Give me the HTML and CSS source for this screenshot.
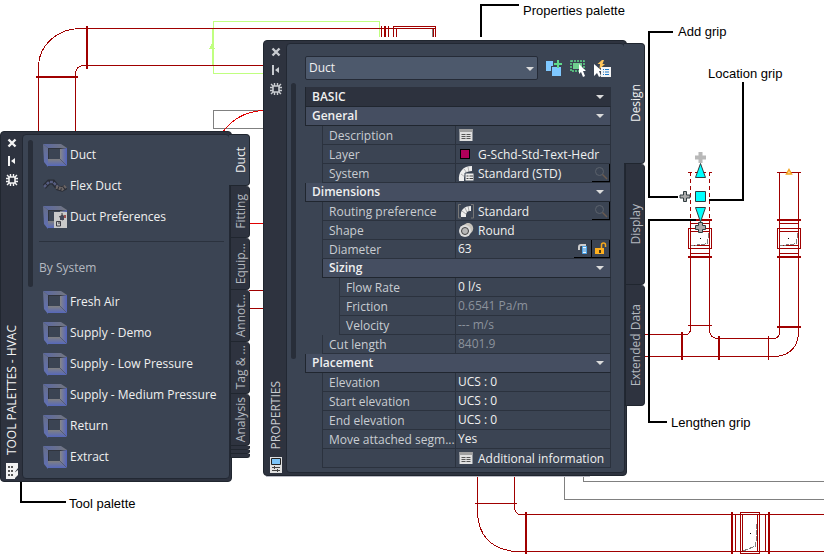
FILE: index.html
```html
<!DOCTYPE html>
<html lang="en">
<head>
<meta charset="utf-8">
<title>Duct properties</title>
<link rel="stylesheet" href="styles.css">
</head>
<body>
<svg class="symbols" aria-hidden="true">
  <defs>
    <linearGradient id="faceTop" x1="0" y1="0" x2="1" y2="0"><stop offset="0" stop-color="#5a68a4"/><stop offset="1" stop-color="#74777f"/></linearGradient>
    <linearGradient id="faceLeft" x1="0" y1="0" x2="0" y2="1"><stop offset="0" stop-color="#666e88"/><stop offset="1" stop-color="#6070b8"/></linearGradient>
    <linearGradient id="faceRight" x1="0" y1="0" x2="1" y2="0"><stop offset="0" stop-color="#878787"/><stop offset="1" stop-color="#5263bd"/></linearGradient>
    <linearGradient id="faceBottom" x1="0" y1="0" x2="0" y2="1"><stop offset="0" stop-color="#808080"/><stop offset="1" stop-color="#5668bb"/></linearGradient>
    <symbol id="duct" viewBox="0 0 24 24">
      <path d="M0 1H18L24 5H5Z" fill="url(#faceTop)"/>
      <path d="M0 1L5 5V24L1 19Z" fill="url(#faceLeft)"/>
      <path d="M5 5H24V23H5Z" fill="#30343d"/>
      <path d="M6 6H17V16H6Z" fill="#3b4453"/>
      <path d="M17 6L24 5V23L17 16Z" fill="url(#faceRight)"/>
      <path d="M5 16H17L24 23H5Z" fill="url(#faceBottom)"/>
      <path d="M17 16L24 23" stroke="#555c74"/>
    </symbol>
    <symbol id="close" viewBox="0 0 10 10"><path d="M1.500 1.500L8.500 8.500M8.500 1.500L1.500 8.500" stroke="currentColor" stroke-width="2.400"/></symbol>
    <symbol id="pin" viewBox="0 0 10 10"><path d="M1 0H3V10H1ZM4 5L8 2V8Z" fill="currentColor"/></symbol>
    <symbol id="gear" viewBox="0 0 12 12"><path d="M3 3H9V9H3Z" fill="none" stroke="currentColor" stroke-width="1.600"/><path d="M4.500 0V3M7.500 0V3M4.500 9V12M7.500 9V12M0 4.500H3M0 7.500H3M9 4.500H12M9 7.500H12M1 1L3 3M11 1L9 3M1 11L3 9M11 11L9 9" stroke="currentColor" stroke-width="1.400"/></symbol>
    <symbol id="sheet" viewBox="0 0 13 12"><path d="M0 0H13V12H0Z" fill="#e0e0e0"/><path d="M0 0H13V3H0Z" fill="#a0a0a0"/><path d="M2 5.500H6M7 5.500H11M2 7.500H6M7 7.500H11M2 9.500H6M7 9.500H11" stroke="#555"/></symbol>
    <symbol id="search" viewBox="0 0 14 14"><circle cx="5.500" cy="5.500" r="4" fill="none" stroke="#5b626c"/><path d="M8.500 8.500L13 13" stroke="#6b5b50" stroke-width="1.400"/></symbol>
  </defs>
</svg>

<main class="canvas">
  <svg class="drawing" width="824" height="559" aria-label="Duct layout drawing" role="img">
    <g class="crisp">
      <path class="green" d="M263 73.500H213.500V21.500H379.500V37"/>
      <path class="green" stroke-width="2" d="M213 28V65"/>
      <path fill="#c0ff80" d="M212 43L215 49H209Z"/>
      <path class="gray" d="M263 110.500H213.500V128.500H263M564.500 476V499.500H824M583.500 476V481.500H824M432.500 29V37"/>
      <path stroke="#e00000" fill="none" d="M223.500 131Q238 112 263 110.500M249 223.500H263"/>
      <g class="duct-line">
        <path d="M38.500 131V66A42 38 0 0 1 80 28.500H435M75.500 131V74Q76 66 83 65.500H263"/>
        <path d="M381.500 26V37M388.500 26V37M393.500 37V26.500H435.500V37M396.500 29V37M433.500 29V37"/>
        <path d="M249 290.500H263M249 308.500H263"/>
        <path d="M645 334.500H686Q690.500 334 690.500 329V221M709.500 221V330Q710 338 717 338.500H774Q779 338 779.500 333V172M645 356.500H776Q798 354 798.500 332V172M777 172.500H801M768.500 336V360M688 325.500H712"/>
        <path d="M690 223.500H710M690 231.500H710M690 245.500H710M690 253.500H710M688.500 228.500H711.500V248.500H688.500Z"/>
        <path d="M779 223.500H799M779 231.500H799M779 245.500H799M779 253.500H799M777.500 228.500H800.500V248.500H777.500Z"/>
        <path stroke-dasharray="4 3" d="M690.500 172V219M709.500 172V219M688 172.500H712"/>
        <path d="M477.500 476V514Q480 548 515 551.500H824M514.500 476V507Q515 514 520 514.500H824M475 503.500H517M735.500 514V552M765.500 514V552M742.500 514V552M757.500 514V552M740.500 512.500H759.500V553.500H740.500Z"/>
        <path stroke-width="2" d="M36 77H78M87 26V69M385 26V37M688 220H712M688 257H712M777 220H801M777 257H801M777 327H801M682 332V360M719 336V360M526 512V554M732 512V554M769 512V554"/>
      </g>
      <path class="gray" stroke-dasharray="5 1" d="M708.500 233L707.500 243L704 244.500L691 245.500M797.500 233L796.500 243L793 244.500L780 245.500M756.500 524V536L755.500 546L748 549L743 551"/>
      <path fill="#000" d="M700 238h1v1h-1zM788 238h1v1h-1zM750 533h1v1h-1z"/>
      <path stroke="#b9bac4" d="M266 476.500H590"/>
      <path class="callout" d="M519 5H481V37M673 32H649V197H678M743 82V200H709M696 220H649V422H667M21 482V502H66"/>
    </g>
    <path d="M789 169.500L791.500 174H786.500Z" fill="#ffd9a0" stroke="#f5a623" stroke-width="1.500"/>
    <path d="M698.500 152h4v3.500h3.500v4h-3.500v3.500h-4v-3.500h-3.500v-4h3.500z" fill="#b8b8b8"/>
    <g fill="#00ffff" stroke="#303d40">
      <path d="M700.500 163.500L705.500 177.500H695.500ZM695.500 191.500H705.500V201.500H695.500ZM695.500 207.500H705.500L700.500 222Z"/>
      <path fill="#aaa" d="M698.500 222.500h4v3h3v4h-3v3h-4v-3h-3v-4h3zM683.500 191.500h3v3.500h3.500v3h-3.500v3.500h-3v-3.500h-3.500v-3h3.500z"/>
    </g>
  </svg>

  <span class="note note-properties">Properties palette</span>
  <span class="note note-add">Add grip</span>
  <span class="note note-location">Location grip</span>
  <span class="note note-lengthen">Lengthen grip</span>
  <span class="note note-tool">Tool palette</span>

  <section class="palette tools" aria-label="Tool palettes">
    <header class="strip">
      <button aria-label="Close"><svg width="10" height="10"><use href="#close"/></svg></button>
      <button aria-label="Auto-hide"><svg width="10" height="10"><use href="#pin"/></svg></button>
      <button aria-label="Options"><svg width="12" height="12"><use href="#gear"/></svg></button>
      <h2>TOOL PALETTES - HVAC</h2>
      <svg width="12" height="16" viewBox="0 0 12 16"><path d="M0 0H12V5L9 9V16H0Z" fill="#f2f2f2"/><path d="M12 7V12L8 16V10Z" fill="#f2f2f2"/><path d="M2 3h2v2h-2zM5 3h2v2h-2zM2 7h2v2h-2zM5 7h2v2h-2zM2 11h2v2h-2zM5 11h2v2h-2z" fill="#555"/></svg>
    </header>
    <div class="body">
      <div class="scroll"></div>
      <div class="tool-list">
        <button><svg width="24" height="24"><use href="#duct"/></svg>Duct</button>
        <button><svg width="24" height="24" viewBox="0 0 24 24"><path d="M1 13L6 8L10 8L15 14L19 15L23 13" fill="none" stroke="#292c35" stroke-width="5"/><path d="M1 13L6 8L10 8L15 13" fill="none" stroke="#565d80" stroke-width="2.500" stroke-dasharray="3 1"/><path d="M13 13L19 15L23 12" fill="none" stroke="#6a6464" stroke-width="3.500" stroke-dasharray="2 1"/></svg>Flex Duct</button>
        <button><svg width="24" height="24" viewBox="0 0 24 24"><use href="#duct"/><path d="M11 7H24V23H11Z" fill="#c9c9c9"/><path d="M13.500 16.500H17.500V21H13.500ZM15 18h2M16 12L20 10V15L17 14M19 8V11" fill="none" stroke="#3c3c44"/><path d="M17 11h4v4h-4z" fill="#44485a"/><path d="M21 10h2v3h-2z" fill="#9b5050"/></svg>Duct Preferences</button>
        <hr>
        <h3>By System</h3>
        <button><svg width="24" height="24"><use href="#duct"/></svg>Fresh Air</button>
        <button><svg width="24" height="24"><use href="#duct"/></svg>Supply - Demo</button>
        <button><svg width="24" height="24"><use href="#duct"/></svg>Supply - Low Pressure</button>
        <button><svg width="24" height="24"><use href="#duct"/></svg>Supply - Medium Pressure</button>
        <button><svg width="24" height="24"><use href="#duct"/></svg>Return</button>
        <button><svg width="24" height="24"><use href="#duct"/></svg>Extract</button>
      </div>
    </div>
    <nav class="tabs">
      <button class="active"><span>Duct</span></button>
      <button><span>Fitting</span></button>
      <button><span>Equip...</span></button>
      <button><span>Annot...</span></button>
      <button><span>Tag &amp; ...</span></button>
      <button><span>Analysis</span></button>
      <i></i><i></i><i></i>
    </nav>
  </section>

  <section class="palette props" aria-label="Properties">
    <header class="strip">
      <button aria-label="Close"><svg width="10" height="10"><use href="#close"/></svg></button>
      <button aria-label="Auto-hide"><svg width="10" height="10"><use href="#pin"/></svg></button>
      <button aria-label="Options"><svg width="12" height="12"><use href="#gear"/></svg></button>
      <h2>PROPERTIES</h2>
      <svg width="12" height="16" viewBox="0 0 12 16"><path d="M0 0H12V16H0Z" fill="#e0e0e0"/><path d="M1.500 1.500H10.500V7.500H1.500Z" fill="#7cc4f8" stroke="#222"/><path d="M2 10.500H10M2 13.500H10M4.500 9V12M7.500 12V15" stroke="#444"/></svg>
    </header>
    <div class="body">
      <div class="scroll"></div>
      <div class="content">
        <div class="toolbar">
          <label class="picker"><select aria-label="Object type"><option>Duct</option></select></label>
          <button aria-label="Toggle pickadd"><svg width="16" height="16" viewBox="0 0 16 16"><path d="M0 1H7V6H5V11H0Z" fill="#7fc8ff"/><path d="M6 7H15V16H6Z" fill="#7fc8ff"/><path d="M9 3H16V5H9Z" fill="#3b4453" stroke="#3b4453" stroke-width="2"/><path d="M8 4H16M12 0V8" stroke="#5fd98a" stroke-width="2"/></svg></button>
          <button aria-label="Select objects"><svg width="16" height="17" viewBox="0 0 16 17"><path d="M1 1H14V11H1Z" fill="none" stroke="#5fd98a" stroke-width="1.500" stroke-dasharray="2 1"/><path d="M3 3H12V9H3Z" fill="#6fcf8e"/><path d="M9 4V14L11 12L13 17L15 16L13 11H16Z" fill="#fff"/></svg></button>
          <button aria-label="Quick select"><svg width="17" height="17" viewBox="0 0 17 17"><path d="M0 4V16L3 13L5 17L7 16L5 11H8Z" fill="#fff"/><path d="M8 0L3.500 4H6L5.500 9L11 4H8.500L10 0Z" fill="#ffc65c"/><path d="M7 7H17V17H7Z" fill="#f4f4f4"/><path d="M9 9.500H10M11 9.500H15M9 12H10M11 12H15M9 14.500H10M11 14.500H15" stroke="#1a78c8"/></svg></button>
        </div>
        <table>
          <colgroup><col class="gutter"><col class="gutter"><col class="name"><col></colgroup>
          <tbody>
            <tr class="basic"><th colspan="4"><button>BASIC</button></th></tr>
            <tr class="group"><th colspan="4"><button>General</button></th></tr>
            <tr><td class="gap"></td><td class="label" colspan="2">Description</td><td><div class="value"><svg width="13" height="12"><use href="#sheet"/></svg></div></td></tr>
            <tr><td class="gap"></td><td class="label" colspan="2">Layer</td><td><div class="value"><i class="swatch"></i><span>G-Schd-Std-Text-Hedr</span></div></td></tr>
            <tr><td class="gap"></td><td class="label" colspan="2">System</td><td><div class="value"><svg width="16" height="16" viewBox="0 0 16 16"><path d="M1 16C0 7 5 1 14 1V6C8 6 6 9 6 16Z" fill="#eee"/><path d="M3 9L7 12M6 4L9 8M10 2L11 7" stroke="#999" stroke-width=".7"/><path d="M7 8H16V16H7Z" fill="#eee" stroke="#3b4453"/><path d="M8.500 11H10.500M11.500 11H15M8.500 13.500H10.500M11.500 13.500H15" stroke="#444"/></svg><span>Standard (STD)</span><button class="cell-button" aria-label="Find system"><svg width="14" height="14"><use href="#search"/></svg></button></div></td></tr>
            <tr class="group"><th colspan="4"><button>Dimensions</button></th></tr>
            <tr><td class="gap"></td><td class="label" colspan="2">Routing preference</td><td><div class="value"><svg width="16" height="16" viewBox="0 0 16 16"><path d="M3 1.500H.5V15H3M13 1.500H15.500V15H13" fill="none" stroke="#777"/><path d="M3 14C2 7 6 3 13 3V8C9 8 8 9 8 14Z" fill="#eee"/><path d="M4 8L8 11M7 5L9 9M10 3L11 8" stroke="#888" stroke-width=".7"/></svg><span>Standard</span><button class="cell-button" aria-label="Find routing preference"><svg width="14" height="14"><use href="#search"/></svg></button></div></td></tr>
            <tr><td class="gap"></td><td class="label" colspan="2">Shape</td><td><div class="value"><svg width="16" height="16" viewBox="0 0 16 16"><path d="M2 5L9 1C14 0 17 6 14 10L9 14Z" fill="#c8c4bc"/><circle cx="7" cy="9" r="6" fill="#ddd"/><circle cx="7" cy="9" r="3.500" fill="#b6b6b6" stroke="#444"/></svg><span>Round</span></div></td></tr>
            <tr><td class="gap"></td><td class="label" colspan="2">Diameter</td><td><div class="value"><input aria-label="Diameter" value="63"><button class="cell-button" aria-label="Calculate"><svg width="10" height="10" viewBox="0 0 10 10"><path d="M1 6V3Q1 1 3 1H8" fill="none" stroke="#ccc" stroke-width="2"/><path d="M4.500 2.500H8.500V9.500H4.500Z" fill="#eef6ff" stroke="#4aa3e8"/><path d="M5 5H8M5 7H8" stroke="#2f86cc"/></svg></button><button class="cell-button lock" aria-label="Unlock"><svg width="12" height="13" viewBox="0 0 12 13"><path d="M6.500 6V3Q6.500 1 8.500 1T10.500 3V5" fill="none" stroke="#f5a81c" stroke-width="1.500"/><path d="M0 6H9V12H0Z" fill="#ffb01f"/><path d="M4 8H6V11H4Z" fill="#4a3a18"/></svg></button></div></td></tr>
            <tr class="group"><td class="gap"></td><th colspan="3"><button>Sizing</button></th></tr>
            <tr><td class="gap"></td><td class="gap"></td><td class="label">Flow Rate</td><td><div class="value"><input aria-label="Flow Rate" value="0 l/s"></div></td></tr>
            <tr><td class="gap"></td><td class="gap"></td><td class="label">Friction</td><td><div class="value muted">0.6541 Pa/m</div></td></tr>
            <tr><td class="gap"></td><td class="gap"></td><td class="label">Velocity</td><td><div class="value muted">--- m/s</div></td></tr>
            <tr><td class="gap"></td><td class="label" colspan="2">Cut length</td><td><div class="value muted">8401.9</div></td></tr>
            <tr class="group"><th colspan="4"><button>Placement</button></th></tr>
            <tr><td class="gap"></td><td class="label" colspan="2">Elevation</td><td><div class="value"><input aria-label="Elevation" value="UCS : 0"></div></td></tr>
            <tr><td class="gap"></td><td class="label" colspan="2">Start elevation</td><td><div class="value"><input aria-label="Start elevation" value="UCS : 0"></div></td></tr>
            <tr><td class="gap"></td><td class="label" colspan="2">End elevation</td><td><div class="value"><input aria-label="End elevation" value="UCS : 0"></div></td></tr>
            <tr><td class="gap"></td><td class="label" colspan="2">Move attached segm...</td><td><div class="value">Yes</div></td></tr>
            <tr><td class="gap"></td><td class="label" colspan="2"></td><td><div class="value"><svg width="13" height="12"><use href="#sheet"/></svg><span>Additional information</span></div></td></tr>
          </tbody>
        </table>
      </div>
    </div>
    <nav class="tabs">
      <button class="active"><span>Design</span></button>
      <button><span>Display</span></button>
      <button><span>Extended Data</span></button>
    </nav>
  </section>
</main>
</body>
</html>
```
FILE: styles.css
```css
* { box-sizing: border-box; }

body {
  margin: 0;
  background: #fff;
  font: 12px/16px "Open Sans", "Noto Sans", sans-serif;
  color: #f0f0f0;
  overflow: hidden;
}

button, input, select {
  font: inherit;
  color: inherit;
  background: none;
  border: 0;
  margin: 0;
  padding: 0;
}

svg { display: block; flex: none; }
h2, h3 { margin: 0; font: inherit; }

.symbols { position: absolute; width: 0; height: 0; }
.canvas { position: relative; min-height: 100vh; }
.drawing { position: absolute; left: 0; top: 0; }
.crisp { shape-rendering: crispEdges; }
.green { fill: none; stroke: #c0ff80; }
.gray { fill: none; stroke: #808080; }
.duct-line { fill: none; stroke: #a00000; }
.callout { fill: none; stroke: #000; stroke-width: 2; }

.note {
  position: absolute;
  color: #000;
  font: 13px/16px "Liberation Sans", Arial, sans-serif;
  white-space: nowrap;
}
.note-properties { left: 523px; top: 3px; }
.note-add { left: 678px; top: 24px; }
.note-location { left: 708px; top: 66px; }
.note-lengthen { left: 671px; top: 415px; }
.note-tool { left: 69px; top: 496px; }

.palette {
  position: absolute;
  display: flex;
  padding: 3px 0;
}
.palette::before {
  content: "";
  position: absolute;
  inset: 0 18px 0 0;
  background: #2e333f;
  border: 1px solid #20262f;
  border-radius: 4px;
}
.tools { left: 0; top: 131px; width: 250px; }
.props { left: 263px; top: 40px; width: 382px; }
.palette > * { position: relative; }

.strip {
  width: 22px;
  padding-left: 2px;
  display: flex;
  flex-direction: column;
  align-items: center;
  color: #f4f4f4;
}
.strip button { height: 19px; display: grid; place-items: center; }
.strip button:first-child { height: 17px; }
.strip h2 {
  writing-mode: vertical-rl;
  transform: rotate(180deg);
  margin: auto 0 8px;
}
.props .strip { width: 23px; color: #c8cbd0; }

.body {
  flex: 1;
  display: flex;
  background: #3b4453;
  border: 1px solid #222833;
  border-radius: 4px;
}
.scroll {
  width: 5px;
  height: 147px;
  margin: 5px 0 0 5px;
  border-radius: 3px;
  background: #282e39;
}
.props .scroll { height: 276px; margin: 39px 0 0 4px; }

.tool-list {
  flex: 1;
  display: flex;
  flex-direction: column;
  padding: 4px 5px 6px 6px;
}
.tool-list button {
  height: 31px;
  padding-left: 4px;
  display: flex;
  align-items: center;
  gap: 3px;
}
.tool-list hr {
  width: 100%;
  height: 1px;
  margin: 9px 0 18px;
  border: 0;
  background: #2b323e;
}
.tool-list h3 { margin-bottom: 10px; color: #b4b9c0; }

.tabs { width: 20px; display: flex; flex-direction: column; }
.tabs button {
  height: 52px;
  padding-left: 2px;
  display: grid;
  place-items: center;
  color: #b4b8bf;
  background: #2e333f;
  border: 1px solid #20262f;
  border-top-width: 0;
  border-radius: 0 4px 4px 0;
}
.props .tabs button { height: 121px; }
.tabs .active {
  color: #f0f0f0;
  background: #3b4453;
  margin-left: -1px;
  padding-left: 4px;
  border-left: 0;
  border-top-width: 1px;
}
.tabs span { writing-mode: vertical-rl; transform: rotate(180deg); white-space: nowrap; }
.tabs i {
  height: 4px;
  background: #2e333f;
  border: 1px solid #20262f;
  border-top: 0;
  border-radius: 0 0 3px 0;
}

.content { flex: 1; padding: 12px 13px 4px 9px; }
.toolbar { display: flex; align-items: center; height: 24px; margin-bottom: 7px; }
.picker { position: relative; flex: 1; margin-right: 8px; }
.picker::after {
  content: "";
  position: absolute;
  right: 4px;
  top: 11px;
  border: 4px solid transparent;
  border-top-color: #dcdcdc;
  border-bottom: 0;
  pointer-events: none;
}
.picker select {
  display: block;
  width: 100%;
  height: 24px;
  padding: 0 3px;
  appearance: none;
  background: #4d596c;
  border: 1px solid #252b37;
  border-radius: 2px;
}
.toolbar button { width: 24px; display: grid; justify-content: start; }
.toolbar button:last-child { width: 17px; }

table { width: 100%; table-layout: fixed; border-collapse: separate; border-spacing: 0; }
.gutter { width: 17px; }
.name { width: 116px; }
td, th {
  height: 19px;
  padding: 0;
  border-left: 1px solid #2b323e;
  border-bottom: 1px solid #2b323e;
  line-height: 16px;
}
tr > :last-child { border-right: 1px solid #2b323e; }
td.gap { border: 0; }
td.label { padding: 2px 0 0 6px; color: #c9cdd2; white-space: nowrap; }
th { background: #454e61; border-color: #20262f; text-align: left; font-weight: 600; }
.basic th { height: 20px; background: #2d323e; }
th button {
  display: flex;
  align-items: center;
  justify-content: space-between;
  width: 100%;
  padding: 0 6px;
  line-height: 16px;
}
th button::after {
  content: "";
  border: 4px solid transparent;
  border-top-color: #dcdcdc;
  border-bottom: 0;
}
.value { display: flex; align-items: center; height: 18px; padding-left: 2px; white-space: nowrap; }
.value > svg { width: 16px; margin-right: 4px; }
.value > span { padding-top: 2px; }
.value input { flex: 1; min-width: 0; height: 16px; }
.muted { color: #8b929c; }
.swatch { width: 10px; height: 10px; margin: 0 8px 0 2px; background: #b0005a; border: 1px solid #000; }
.cell-button {
  width: 18px;
  height: 18px;
  display: grid;
  place-items: center;
  border-right: 1px solid #000;
  border-bottom: 1px solid #000;
}
.value span + .cell-button { margin-left: auto; }
```
